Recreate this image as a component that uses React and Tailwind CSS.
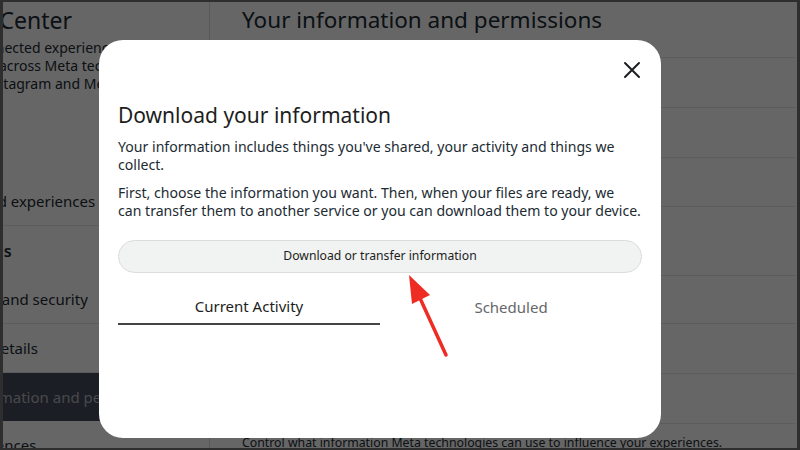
import React from "react";

const F = { fontFamily: '"Noto Sans", "Liberation Sans", sans-serif' };

export default function App() {
  return (
    <div className="relative w-[800px] h-[450px] overflow-hidden bg-white border-x-[3px] border-y-2 border-[#2e2e2e]" style={F}>
      {/* background page */}
      <div className="flex h-full text-[#1c2b33]">
        <div className="w-[207px] shrink-0 border-r border-[#dadde1] overflow-hidden">
          <div className="whitespace-nowrap text-[23px] leading-[30px] -ml-[108px] pt-[3px]">Accounts Center</div>
          <div className="mt-[4px] text-[14px] leading-[18px] whitespace-nowrap">
            <div className="-ml-[122px]">Manage your conn<span>ected experiences and</span></div>
            <div className="-ml-[4px]">across Meta technologies</div>
            <div className="-ml-[46px]">like Instagram and Meta</div>
          </div>
          <div className="mt-[20px] whitespace-nowrap text-[15px]">
            <div className="h-[49px] flex items-center -ml-[72px] mt-[84px] border-b border-[#e4e6eb]">Connected experiences</div>
            <div className="h-[49px] flex items-center -ml-[122px] text-[16px] font-semibold">Account settings</div>
            <div className="h-[49px] flex items-center -ml-[73px] border-b border-[#e4e6eb]">Password and security</div>
            <div className="h-[49px] flex items-center -ml-[77px] border-b border-[#e4e6eb]">Personal details</div>
            <div className="h-[48px] flex items-center -ml-[74px] bg-[#444c5a] text-white/60">Your information and permissions</div>
            <div className="h-[49px] flex items-center -ml-[73px]">Ad preferences</div>
          </div>
        </div>
        <div className="flex-1 pl-[32px] pt-[3px] pr-[2px]">
          <div className="text-[22.5px] leading-[30px] whitespace-nowrap">Your information and permissions</div>
          <div className="mt-[22px] flex flex-col">
            <div className="h-[50px] border-t border-[#e4e6eb]"></div>
            <div className="h-[50px] border-t border-[#e4e6eb]"></div>
            <div className="h-[49px] border-t border-[#e4e6eb]"></div>
            <div className="h-[69px] border-t border-[#e4e6eb]"></div>
            <div className="h-[48px] border-t border-[#e4e6eb]"></div>
            <div className="h-[50px] border-t border-[#e4e6eb]"></div>
            <div className="h-[50px] border-t border-[#e4e6eb]"></div>
            <div className="border-t border-[#e4e6eb] pt-[10px] text-[12.3px] whitespace-nowrap">Control what information Meta technologies can use to influence your experiences.</div>
          </div>
        </div>
      </div>

      {/* overlay */}
      <div className="absolute inset-0 bg-black/60"></div>

      {/* modal */}
      <div className="absolute left-[96px] top-[38px] w-[562px] h-[398px] rounded-[24px] bg-white px-[19px] pt-[61px] text-[#1c1e21]">
        <button className="absolute right-[19px] top-[20px] w-[20px] h-[20px] flex items-center justify-center">
          <svg width="18" height="18" viewBox="0 0 18 18" fill="none" stroke="#1c1e21" strokeWidth="2" strokeLinecap="round">
            <path d="M2 2L16 16M16 2L2 16" />
          </svg>
        </button>
        <div className="text-[21px] leading-[28px]">Download your information</div>
        <div className="mt-[9px] text-[14.1px] leading-[18px] text-[#1c2b33]">
          Your information includes things you've shared, your activity and things we<br />collect.
        </div>
        <div className="mt-[10px] text-[14.1px] leading-[18px] text-[#1c2b33]">
          First, choose the information you want. Then, when your files are ready, we<br />can transfer them to another service or you can download them to your device.
        </div>
        <button className="mt-[20px] w-full h-[33px] rounded-full bg-[#f1f2f2] border border-[#dcdcdc] text-[12.2px] text-[#1c1e21]">
          Download or transfer information
        </button>
        <div className="mt-[17px] grid grid-cols-2 text-[15px]">
          <div className="h-[35px] flex items-center justify-center border-b-2 border-[#444]">Current Activity</div>
          <div className="h-[35px] flex items-center justify-center text-[#65676b]">Scheduled</div>
        </div>
      </div>

      {/* red arrow annotation */}
      <svg className="absolute left-0 top-0" width="800" height="450" viewBox="0 0 800 450">
        <line x1="443" y1="353" x2="416" y2="294" stroke="#ee2c24" strokeWidth="3.5" strokeLinecap="round" />
        <polygon points="406,273 427,293 409,302" fill="#ee2c24" />
      </svg>
    </div>
  );
}
